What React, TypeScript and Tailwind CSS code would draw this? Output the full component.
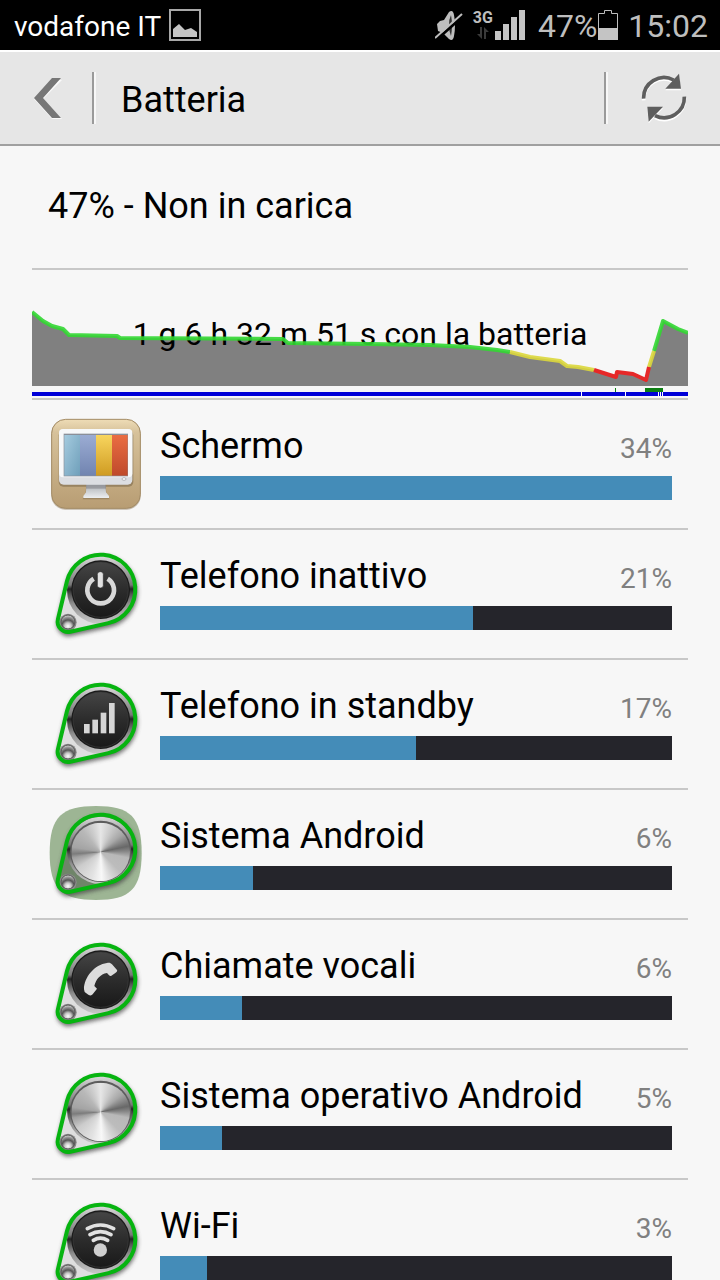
import type { ReactNode } from 'react';

type IconName = 'power' | 'signal' | 'phone' | 'wifi' | 'metal' | 'metalTile' | 'screen';

interface UsageItem {
  label: string;
  percent: number;
  bar: number;
  icon: IconName;
}

const usage: UsageItem[] = [
  { label: 'Schermo', percent: 34, bar: 100, icon: 'screen' },
  { label: 'Telefono inattivo', percent: 21, bar: 61.2, icon: 'power' },
  { label: 'Telefono in standby', percent: 17, bar: 50, icon: 'signal' },
  { label: 'Sistema Android', percent: 6, bar: 18.2, icon: 'metalTile' },
  { label: 'Chiamate vocali', percent: 6, bar: 16, icon: 'phone' },
  { label: 'Sistema operativo Android', percent: 5, bar: 12.2, icon: 'metal' },
  { label: 'Wi-Fi', percent: 3, bar: 9.2, icon: 'wifi' },
];

function ScreenIcon() {
  return (
    <svg viewBox="24 18 288 288" className="size-24 shrink-0" aria-hidden="true">
      <defs>
        <linearGradient id="tile" x1="0" y1="0" x2="0" y2="1">
          <stop offset="0" stopColor="#eedcb6" />
          <stop offset="0.15" stopColor="#d6c19a" />
          <stop offset="1" stopColor="#b89d73" />
        </linearGradient>
        <linearGradient id="blue1" x1="0" y1="0" x2="1" y2="1">
          <stop offset="0" stopColor="#a5cbdf" />
          <stop offset="1" stopColor="#6f9fba" />
        </linearGradient>
        <linearGradient id="blue2" x1="0" y1="0" x2="0" y2="1">
          <stop offset="0" stopColor="#9bacd3" />
          <stop offset="1" stopColor="#7184b0" />
        </linearGradient>
        <linearGradient id="yellow" x1="0" y1="0" x2="0" y2="1">
          <stop offset="0" stopColor="#f8d55e" />
          <stop offset="1" stopColor="#cf9b22" />
        </linearGradient>
        <linearGradient id="red" x1="0" y1="0" x2="0" y2="1">
          <stop offset="0" stopColor="#ea6d43" />
          <stop offset="1" stopColor="#bf4a2b" />
        </linearGradient>
        <linearGradient id="stand" x1="0" y1="0" x2="0" y2="1">
          <stop offset="0" stopColor="#a9adb2" />
          <stop offset="1" stopColor="#eceef0" />
        </linearGradient>
      </defs>
      <rect x="34" y="29" width="268" height="270" rx="42" fill="#8b7555" opacity="0.5" />
      <rect x="35" y="28" width="266" height="267" rx="42" fill="url(#tile)" stroke="#a48c66" strokeWidth="3" />
      <rect x="56" y="62" width="224" height="168" rx="14" fill="#7d6a4c" opacity="0.6" />
      <path d="M139 222H196L199 247L209 268H128L137 247Z" fill="#7d6a4c" opacity="0.5" />
      <path d="M139 222H196L198 247L207 258V264H130V258L138 247Z" fill="url(#stand)" />
      <rect x="138" y="224" width="60" height="12" fill="#85868a" opacity="0.6" />
      <rect x="57" y="57" width="220" height="167" rx="14" fill="#dcdee2" />
      <rect x="57" y="57" width="220" height="145" rx="12" fill="#f7f8f9" />
      <rect x="71" y="71" width="193" height="128" fill="#8b8f98" />
      <rect x="73" y="75" width="47" height="122" fill="url(#blue1)" />
      <rect x="120" y="75" width="48" height="122" fill="url(#blue2)" />
      <rect x="168" y="75" width="48" height="122" fill="url(#yellow)" />
      <rect x="216" y="75" width="47" height="122" fill="url(#red)" />
      <ellipse cx="252" cy="207" rx="6" ry="4" fill="#fff" stroke="#9a9ca0" strokeWidth="2" />
    </svg>
  );
}

const glyphs: Record<'power' | 'signal' | 'phone' | 'wifi', ReactNode> = {
  power: (
    <>
      <path d="M161 116A40 40 0 1 0 203 116" fill="none" stroke="#d8d8d8" strokeWidth="14" />
      <rect x="172" y="95" width="18" height="49" rx="8" fill="#e2e2e2" stroke="#2b2b2b" strokeWidth="2" />
    </>
  ),
  signal: (
    <g fill="#d6d6d6">
      <rect x="132" y="162" width="17" height="28" />
      <rect x="157" y="149" width="17" height="41" />
      <rect x="182" y="128" width="17" height="62" />
      <rect x="207" y="99" width="17" height="91" />
    </g>
  ),
  phone: (
    <path
      d="M132 178C132 142 164 103 201 99C207 97 212 98 216 103L231 120C233 123 230 126 226 129L213 138C209 139 205 134 201 129C181 132 167 149 163 168L171 176L158 193C154 198 149 196 145 194L134 186Z"
      fill="#dcdcdc"
    />
  ),
  wifi: (
    <>
      <g fill="none" stroke="#e2e2e2" strokeWidth="11" strokeLinecap="round">
        <path d="M142 116Q181 94 221 116" />
        <path d="M150 134Q181 116 213 134" />
        <path d="M160 151Q181 138 203 151" />
      </g>
      <circle cx="181" cy="180" r="20" fill="#cfcfcf" />
    </>
  ),
};

const DROP = 'M53.8 237.8L80.8 124A104 104 0 1 1 205 249.4L90.9 275.2A31 31 0 0 1 53.8 237.8Z';

function KnobIcon({ name }: { name: Exclude<IconName, 'screen'> }) {
  const isMetal = name === 'metal' || name === 'metalTile';
  const id = (part: string) => `${name}-${part}`;
  return (
    <svg viewBox="24 18 288 288" className="size-24 shrink-0 overflow-visible" aria-hidden="true">
      <defs>
        <linearGradient id={id('rim')} x1="0" y1="0" x2="0" y2="1">
          <stop offset="0" stopColor="#d8d8d8" />
          <stop offset="0.25" stopColor="#9c9c9c" />
          <stop offset="0.42" stopColor="#777" />
          <stop offset="0.48" stopColor="#222" />
          <stop offset="0.56" stopColor="#555" />
          <stop offset="0.7" stopColor="#8f8f8f" />
          <stop offset="1" stopColor="#c9c9c9" />
        </linearGradient>
        <linearGradient id={id('face')} x1="0" y1="0" x2="0" y2="1">
          <stop offset="0" stopColor="#454545" />
          <stop offset="0.5" stopColor="#2c2c2c" />
          <stop offset="1" stopColor="#191919" />
        </linearGradient>
        <radialGradient id={id('screw')} cx="0.5" cy="0.8" r="0.8">
          <stop offset="0" stopColor="#fff" />
          <stop offset="0.3" stopColor="#c4c4c4" />
          <stop offset="0.55" stopColor="#555" />
          <stop offset="0.8" stopColor="#999" />
          <stop offset="1" stopColor="#e0e0e0" />
        </radialGradient>
        <filter id={id('shadow')} x="-20%" y="-20%" width="140%" height="140%">
          <feGaussianBlur stdDeviation="7" />
        </filter>
      </defs>
      {name === 'metalTile' && (
        <path
          d="M168 18C270 18 305 50 305 159C305 268 270 300 168 300C66 300 29 268 29 159C29 50 66 18 168 18Z"
          fill="#9db594"
        />
      )}
      <path d={DROP} transform="translate(2 8)" fill="#444" stroke="#444" strokeWidth="10" opacity="0.75" filter={`url(#${id('shadow')})`} />
      <path d={DROP} fill={name === 'metalTile' ? '#6f8569' : '#dedede'} />
      <circle cx="182" cy="151" r="101" fill={`url(#${id('rim')})`} />
      {isMetal ? (
        <>
          <circle cx="182" cy="154" r="92" fill="#5c5c5c" />
          <foreignObject x="94" y="68" width="176" height="176">
            <div className="size-full rounded-full bg-[conic-gradient(from_0deg,#e6e6e6_0deg,#cacaca_25deg,#a8a8a8_50deg,#686868_78deg,#858585_88deg,#b8b8b8_102deg,#bcbcbc_135deg,#d4d4d4_155deg,#f8f8f8_178deg,#e2e2e2_200deg,#cccccc_235deg,#a0a0a0_258deg,#7c7c7c_266deg,#a4a4a4_280deg,#b8b8b8_320deg,#d0d0d0_342deg,#e6e6e6_360deg)]" />
          </foreignObject>
        </>
      ) : (
        <>
          <circle cx="182" cy="149" r="88" fill="#1a1a1a" />
          <circle cx="182" cy="149" r="83" fill={`url(#${id('face')})`} stroke="#3d3d3d" strokeWidth="2" />
          {glyphs[name]}
        </>
      )}
      <circle cx="84" cy="247" r="26" fill="#8b8b8b" />
      <circle cx="84" cy="246" r="21" fill={`url(#${id('screw')})`} stroke="#555" strokeWidth="3" />
      <path d={DROP} fill="none" stroke="#06b410" strokeWidth="12" />
    </svg>
  );
}

function StatusBar() {
  return (
    <div className="flex h-[50px] shrink-0 items-center justify-between bg-black pr-3 pl-[14px] text-[#bebebe]">
      <div className="flex items-center gap-2">
        <span className="pt-1 text-[28px] leading-8 text-white">vodafone IT</span>
        <svg viewBox="0 0 32 32" className="size-8" aria-hidden="true">
          <rect x="1" y="1" width="30" height="30" fill="none" stroke="#a8a8a8" strokeWidth="2" />
          <path d="M4 28V20L10 15L16 21L22 19L28 23V28Z" fill="#c4c4c4" />
        </svg>
      </div>
      <div className="flex items-center">
        <svg viewBox="0 0 28 32" className="mr-[11px] h-8 w-7" aria-hidden="true">
          <path d="M2 15L5 12L9 11L14 3Q18 0 19 6Q21 16 19 27Q18 33 14 30L8 24L3 22Z" fill="#bebebe" />
          <path d="M16 6Q18 16 16 27Q14 22 14 16Q14 10 16 6Z" fill="#333" />
          <path d="M1 31L28 7" stroke="#000" strokeWidth="3" />
          <path d="M0 29L27 5" stroke="#bebebe" strokeWidth="2" />
        </svg>
        <div className="mr-[3px] flex w-[18px] flex-col items-center">
          <span className="text-base leading-4 font-bold">3G</span>
          <svg viewBox="0 0 12 14" className="h-[14px] w-3" fill="#3a3a3a" aria-hidden="true">
            <path d="M3 1H5V13L0 8H3Z" />
            <path d="M9 13H7V1L12 6H9Z" />
          </svg>
        </div>
        <svg viewBox="0 0 30 30" className="mr-[13px] size-[30px]" fill="#c4c4c4" aria-hidden="true">
          <path d="M0 21H6V30H0ZM8 14H14V30H8ZM16 7H22V30H16ZM24 0H30V30H24Z" />
        </svg>
        <span className="pt-0.5 text-[32px] leading-8">47%</span>
        <svg viewBox="0 0 20 30" className="mr-[10px] ml-px h-[30px] w-5" aria-hidden="true">
          <path d="M0.5 29.5V3.5H6.5V0.5H13.5V3.5H19.5V29.5Z" fill="none" stroke="#bebebe" />
          <path d="M0 18H20V30H0Z" fill="#c4c4c4" />
        </svg>
        <span className="pt-0.5 text-[32px] leading-8">15:02</span>
      </div>
    </div>
  );
}

function TitleBar() {
  return (
    <header className="flex h-24 shrink-0 items-center border-t-2 border-b-2 border-t-white border-b-[#a0a0a0] bg-[#e6e6e6]">
      <button type="button" aria-label="Indietro" className="flex h-full w-[92px] items-center pl-[34px]">
        <svg viewBox="0 0 28 41" className="h-[41px] w-7" aria-hidden="true">
          <path d="M18 2H28L9 21L28 41H18L0 21Z" fill="#fafafa" />
          <path d="M18 0H27L9 20L27 40H18L0 20Z" fill="#777" />
        </svg>
      </button>
      <div className="h-[52px] w-1 border-r-2 border-l-2 border-r-[#f7f7f7] border-l-[#9a9a9a]" />
      <h1 className="flex-1 pt-1 pl-[25px] text-[36px] leading-10 text-black">Batteria</h1>
      <div className="h-[52px] w-1 border-r-2 border-l-2 border-r-[#f7f7f7] border-l-[#9a9a9a]" />
      <button type="button" aria-label="Aggiorna" className="flex h-full w-28 items-center justify-center">
        <svg viewBox="724 220 138 150" className="h-[50px] w-[46px]" aria-hidden="true">
          {[
            { color: '#fff', shift: 'translate(0 5)' },
            { color: '#5e5e5e', shift: 'translate(0 0)' },
          ].map((layer) => (
            <g key={layer.color} transform={layer.shift}>
              <path d="M732 297A61 61 0 0 1 822 241" fill="none" stroke={layer.color} strokeWidth="11" />
              <path d="M838 222L844 267H797Z" fill={layer.color} />
              <path d="M854 291A61 61 0 0 1 766 348" fill="none" stroke={layer.color} strokeWidth="11" />
              <path d="M743 321H790L747 366Z" fill={layer.color} />
            </g>
          ))}
        </svg>
      </button>
    </header>
  );
}

function HistoryChart() {
  return (
    <section className="grid h-[130px] items-start border-b-2 border-[#c8c8c4]">
      <svg viewBox="0 0 656 128" preserveAspectRatio="none" className="col-start-1 row-start-1 h-32 w-full" aria-hidden="true">
        <path
          d="M0 42L11 51L20 56L31 59L37 65L85 66L88 68L251 69L256 73L338 74L398 75L438 77L465 80L478 82L498 87L528 91L535 96L546 97L562 100L584 107L585 102L601 104L614 110L617 97L622 81L631 51L646 59L656 63V116H0Z"
          fill="#808080"
        />
        <path d="M0 122H656V126H0Z" fill="#0000d8" />
        <path d="M549 122h1v4h-1zM593 122h1v4h-1zM626 122h1v4h-1zM628 122h1v4h-1zM630 122h1v4h-1z" fill="#fff" />
        <path d="M583 118h1v4h-1zM613 118h18v4h-18z" fill="#0c7f12" />
      </svg>
      <p className="col-start-1 row-start-1 pt-11 text-center text-[32px] leading-10 text-black">
        1 g 6 h 32 m 51 s con la batteria
      </p>
      <svg
        viewBox="0 0 656 128"
        preserveAspectRatio="none"
        className="col-start-1 row-start-1 h-32 w-full"
        fill="none"
        strokeWidth="4"
        strokeLinejoin="round"
        aria-hidden="true"
      >
        <g stroke="#32d732" opacity="0.9">
          <path d="M0 42L11 51L20 56L31 59L37 65L85 66L88 68L251 69L256 73L338 74L398 75L438 77L465 80L478 82" />
          <path d="M622 81L631 51L646 59L656 63" />
        </g>
        <g stroke="#dcd83c" opacity="0.9">
          <path d="M478 82L498 87L528 91L535 96L546 97L562 100" />
          <path d="M617 97L622 81" />
        </g>
        <path d="M562 100L584 107L585 102L601 104L614 110L617 97" stroke="#e62828" />
      </svg>
    </section>
  );
}

function UsageRow({ item }: { item: UsageItem }) {
  return (
    <li className="flex gap-4 border-b-2 border-[#c8c8c8] px-4 py-4">
      {item.icon === 'screen' ? <ScreenIcon /> : <KnobIcon name={item.icon} />}
      <div className="min-w-0 flex-1 pt-2">
        <div className="flex items-baseline justify-between">
          <span className="text-[36px] leading-[44px] text-black">{item.label}</span>
          <span className="text-[28px] leading-8 text-[#808080]">{item.percent}%</span>
        </div>
        <div className="mt-2 h-6 bg-[#25252b]">
          <div className="h-full bg-[#448cb8]" style={{ width: `${item.bar}%` }} />
        </div>
      </div>
    </li>
  );
}

export default function App() {
  return (
    <div className="flex h-screen flex-col bg-[#f7f7f7] font-[Roboto,sans-serif]">
      <StatusBar />
      <TitleBar />
      <main className="min-h-0 flex-1 overflow-y-auto px-8 [scrollbar-width:none]">
        <h2 className="border-b-2 border-[#c8c8c8] px-4 pt-[35px] pb-[37px] text-[36px] leading-[50px] text-black">
          47% - Non in carica
        </h2>
        <HistoryChart />
        <ul>
          {usage.map((item) => (
            <UsageRow key={item.label} item={item} />
          ))}
        </ul>
      </main>
    </div>
  );
}
